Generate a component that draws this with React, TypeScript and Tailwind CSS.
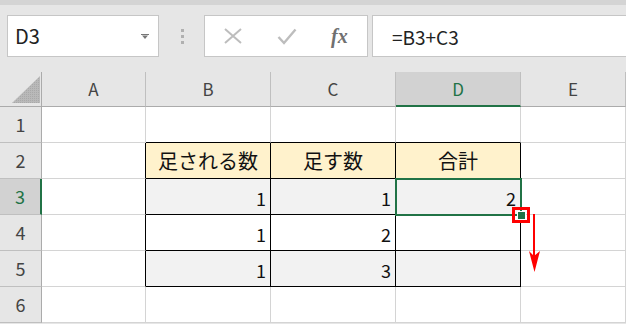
import React from 'react';

const columns = [
    { key: 'A', width: 'w-[104px]' },
    { key: 'B', width: 'w-[125px]' },
    { key: 'C', width: 'w-[125px]' },
    { key: 'D', width: 'w-[125px]' },
    { key: 'E', width: 'w-[105px]' },
];

const rows = [1, 2, 3, 4, 5, 6];

const values: Record<string, string> = {
    B2: '足される数',
    C2: '足す数',
    D2: '合計',
    B3: '1',
    C3: '1',
    D3: '2',
    B4: '1',
    C4: '2',
    B5: '1',
    C5: '3',
};

const inTable = (col: string, row: number) => row >= 2 && row <= 5 && ['B', 'C', 'D'].includes(col);

const cellClass = (col: string, row: number) => {
    const rightBlack = inTable(col, row) || (col === 'A' && row >= 2 && row <= 5);
    const bottomBlack = inTable(col, row) || (row === 1 && ['B', 'C', 'D'].includes(col));
    let bg = 'bg-white';
    if (inTable(col, row)) {
        if (row === 2) bg = 'bg-[#fff2cc]';
        else if (row === 3 || row === 5) bg = 'bg-[#f2f2f2]';
    }
    return [
        'h-[36px] border-r border-b',
        rightBlack ? 'border-r-black' : 'border-r-[#d4d4d4]',
        bottomBlack ? 'border-b-black' : 'border-b-[#d4d4d4]',
        bg,
    ].join(' ');
};

const Cell = ({ col, row, width }: { col: string; row: number; width: string }) => {
    const text = values[col + row];
    const isHeader = row === 2;
    return (
        <div className={`${width} ${cellClass(col, row)} flex ${isHeader ? 'items-center justify-center text-[20px]' : 'items-end justify-end pr-[4px] pb-[4px] text-[18px]'} leading-[24px] text-[#111]`}>
            {text}
        </div>
    );
};

export default function App() {
    return (
        <div className="w-[626px] h-[324px] overflow-hidden bg-[#e6e6e6] flex flex-col font-['Noto_Sans_CJK_JP','Liberation_Sans',sans-serif]">
            <div className="h-[5px] bg-[#d4d4d4]" />

            {/* Formula bar */}
            <div className="mt-[10px] h-[42px] flex">
                <div className="ml-[7px] w-[152px] bg-white border border-[#c6c6c6] flex items-center justify-between pl-[7px] pr-[9px]">
                    <span className="text-[20px] text-[#222] leading-none">D3</span>
                    <svg width="8" height="5" viewBox="0 0 8 5">
                        <rect x="0" y="0" width="8" height="1" fill="#777" />
                        <polygon points="1,1.5 7,1.5 4,5" fill="#777" />
                    </svg>
                </div>
                <div className="w-[45px] flex flex-col items-center justify-center gap-[3px] pl-[1px]">
                    <div className="w-[3px] h-[3px] bg-[#b0b0b0]" />
                    <div className="w-[3px] h-[3px] bg-[#b0b0b0]" />
                    <div className="w-[3px] h-[3px] bg-[#b0b0b0]" />
                </div>
                <div className="w-[164px] bg-white border border-[#c6c6c6] flex items-center pl-[18px]">
                    <svg width="20" height="16" viewBox="0 0 20 16">
                        <path d="M2 1 L18 15 M18 1 L2 15" stroke="#bdbdbd" strokeWidth="2" />
                    </svg>
                    <svg width="20" height="17" viewBox="0 0 20 17" className="ml-[34px]">
                        <path d="M1.5 9 L7 15 L18.5 1.5" stroke="#bdbdbd" strokeWidth="2.4" fill="none" />
                    </svg>
                    <span className="ml-[34px] text-[20px] leading-none italic font-bold text-[#707070] font-['Liberation_Serif',serif]">fx</span>
                </div>
                <div className="ml-[4px] flex-1 bg-white border border-r-0 border-[#c6c6c6] flex items-center pl-[19px]">
                    <span className="text-[19px] leading-none text-[#222]">=B3+C3</span>
                </div>
            </div>

            {/* Sheet */}
            <div className="mt-[15px] relative">
                <div className="flex h-[35px] text-[17px] text-[#444]">
                    <div className="w-[42px] border-r border-b border-[#ababab] flex items-end justify-end pr-[1px] pb-[3px]">
                        <svg width="28" height="27" viewBox="0 0 28 27">
                            <defs>
                                <pattern id="dots" width="2" height="2" patternUnits="userSpaceOnUse">
                                    <rect width="2" height="2" fill="#b9b9b9" />
                                    <rect width="1" height="1" fill="#a9a9a9" />
                                </pattern>
                            </defs>
                            <polygon points="28,0 28,27 0,27" fill="url(#dots)" />
                        </svg>
                    </div>
                    {columns.map((c) => (
                        <div
                            key={c.key}
                            className={`${c.width} flex items-center justify-center border-r border-r-[#bfbfbf] ${c.key === 'D' ? 'bg-[#d2d2d2] border-b-2 border-b-[#217346] text-[#217346]' : 'border-b border-b-[#ababab]'}`}
                        >
                            {c.key}
                        </div>
                    ))}
                </div>

                {rows.map((r) => (
                    <div key={r} className="flex">
                        <div
                            className={`w-[42px] h-[36px] border-b border-b-[#bfbfbf] flex items-center justify-center text-[18px] ${r === 3 ? 'bg-[#d2d2d2] border-r-2 border-r-[#217346] text-[#217346]' : 'border-r border-r-[#ababab] text-[#444]'}`}
                        >
                            {r}
                        </div>
                        {columns.map((c) => (
                            <Cell key={c.key} col={c.key} row={r} width={c.width} />
                        ))}
                    </div>
                ))}

                {/* active cell D3 */}
                <div className="absolute left-[395px] top-[106px] w-[127px] h-[38px] border-2 border-[#217346]" />
                <div className="absolute left-[517px] top-[139px] w-[9px] h-[9px] bg-[#217346] border border-white" />

                {/* annotation */}
                <div className="absolute left-[512px] top-[135px] w-[18px] h-[16px] border-[3px] border-[#ff0000]" />
                <svg className="absolute left-[528px] top-[142px]" width="14" height="58" viewBox="0 0 14 58">
                    <rect x="5" y="0" width="2" height="42" fill="#ff0000" />
                    <polygon points="1,37 6,42 12,37 6.5,58" fill="#ff0000" />
                </svg>
            </div>
        </div>
    );
}
